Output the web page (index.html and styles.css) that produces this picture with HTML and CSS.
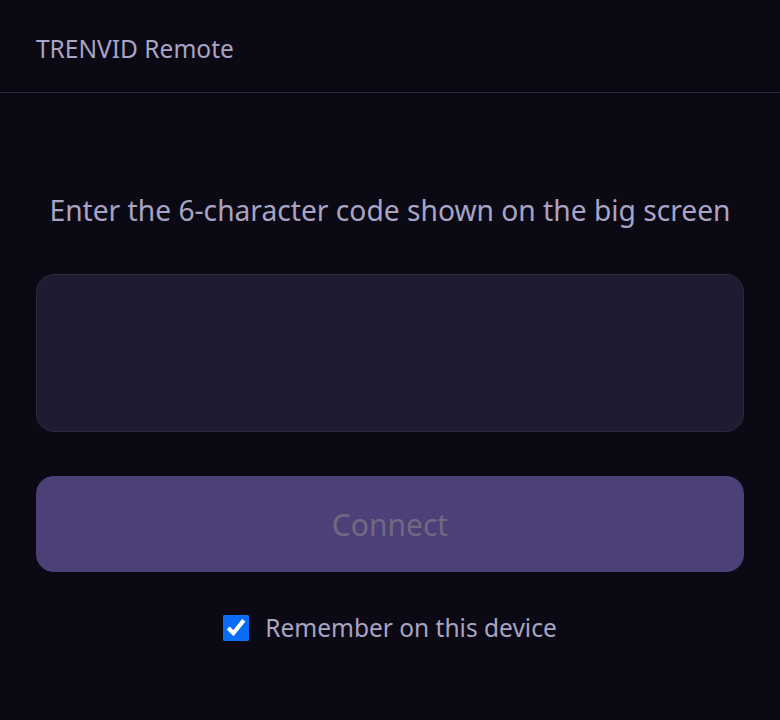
FILE: index.html
```html
<!DOCTYPE html>
<html lang="en">
<head>
<meta charset="utf-8">
<title>TRENVID Remote</title>
<link rel="stylesheet" href="styles.css">
</head>
<body>
<header class="topbar">
  <span class="brand">TRENVID Remote</span>
</header>
<main class="join">
  <p class="prompt">Enter the 6-character code shown on the big screen</p>
  <input class="code-input" type="text" maxlength="6" aria-label="Code">
  <button class="connect" type="button" disabled>Connect</button>
  <label class="remember">
    <input class="remember-box" type="checkbox" checked>
    <span>Remember on this device</span>
  </label>
</main>
</body>
</html>
```
FILE: styles.css
```css
html, body {
  margin: 0;
  padding: 0;
  background: #0b0a14;
  font-family: "Noto Sans", "Open Sans", sans-serif;
  color: #a9a3c4;
}
.topbar {
  height: 93px;
  box-sizing: border-box;
  border-bottom: 1px solid #2a2740;
  display: flex;
  align-items: center;
  padding: 5px 36px 0;
}
.brand {
  font-size: 24.5px;
  line-height: 32px;
  color: #a9a3c4;
}
.join {
  display: flex;
  flex-direction: column;
  padding: 0 36px;
}
.prompt {
  margin: 99px 0 0;
  text-align: center;
  font-size: 28.2px;
  line-height: 36px;
  white-space: nowrap;
  color: #a9a3c4;
}
.code-input {
  margin-top: 46px;
  height: 158px;
  box-sizing: border-box;
  background: #1f1c32;
  border: 1px solid #2c2842;
  border-radius: 18px;
  outline: none;
  color: #e6e2f5;
  font-family: inherit;
  font-size: 40px;
  text-align: center;
}
.connect {
  margin-top: 44px;
  height: 96px;
  border: none;
  border-radius: 18px;
  background: #4d3f78;
  color: #6f6a82;
  font-family: inherit;
  font-size: 30px;
}
.remember {
  margin-top: 39px;
  display: flex;
  align-items: center;
  justify-content: center;
  gap: 16px;
  font-size: 24.5px;
  line-height: 34px;
  color: #a9a3c4;
}
.remember-box {
  margin: 0;
  width: 26px;
  height: 26px;
  accent-color: #0a6cf5;
}
```
